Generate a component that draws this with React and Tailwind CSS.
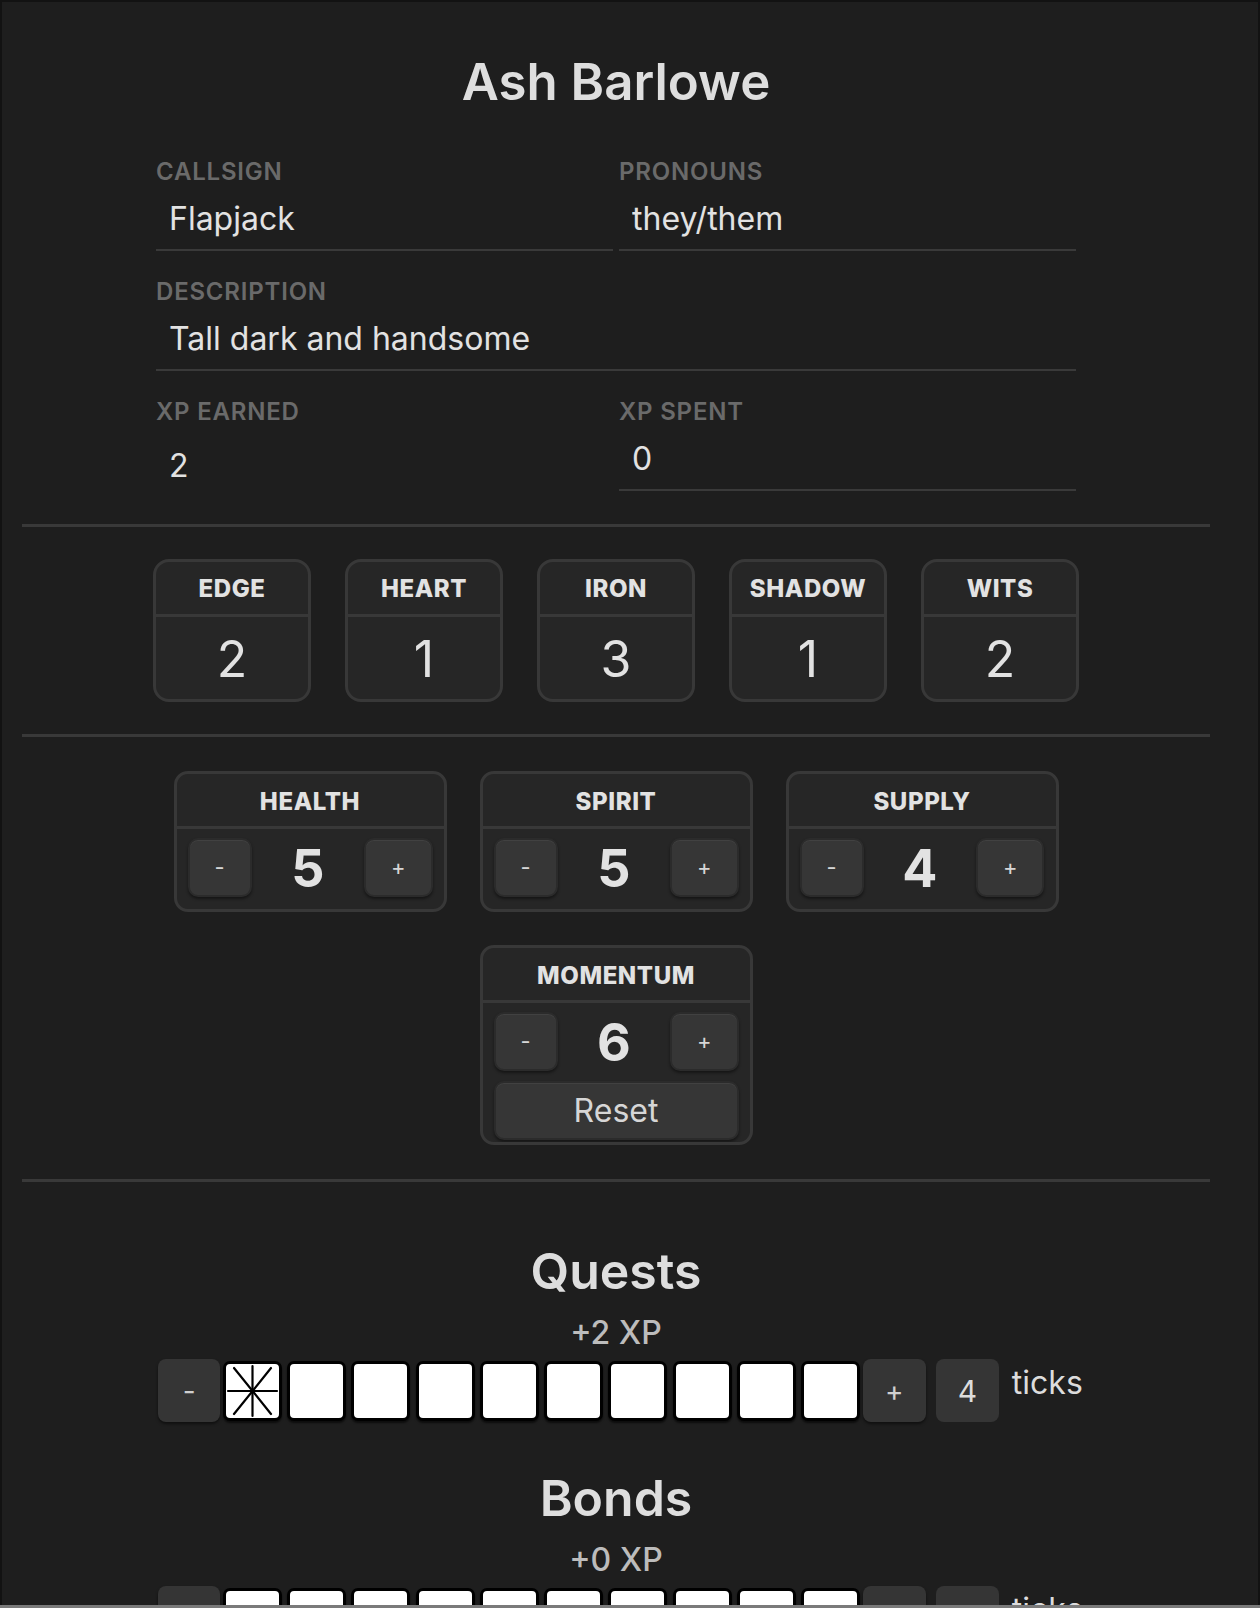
import React from 'react';

const stats = [
  ['EDGE', 2],
  ['HEART', 1],
  ['IRON', 3],
  ['SHADOW', 1],
  ['WITS', 2],
];

function Field({ label, value, plain }) {
  return (
    <div className="flex flex-col">
      <label className="text-[24px] leading-[30px] font-semibold uppercase tracking-[0.8px] text-[#6a6a6a]">{label}</label>
      {plain ? (
        <div className="pt-[19px] px-[13px] text-[32px] leading-[40px] text-[#e2e2e2]">{value}</div>
      ) : (
        <input
          readOnly
          value={value}
          className="w-full bg-transparent outline-none pt-[12px] pb-[10px] px-[13px] text-[32px] leading-[40px] text-[#e2e2e2] border-b-2 border-[#3a3a3a]"
        />
      )}
    </div>
  );
}

function StatBox({ name, value }) {
  return (
    <div className="w-[158px] rounded-[16px] border-[3px] border-[#383838] bg-[#262626] overflow-hidden">
      <div className="h-[55px] pt-[2px] flex items-center justify-center border-b-[3px] border-[#383838] text-[24px] font-extrabold tracking-[0.6px] text-[#e2e2e2]">
        {name}
      </div>
      <div className="h-[82px] flex items-center justify-center pt-[3px] text-[50px] text-[#e2e2e2]">{value}</div>
    </div>
  );
}

function SmallBtn({ children }) {
  return (
    <button className="h-[59px] px-[25px] rounded-[10px] bg-[#363636] border-2 border-[#2b2b2b] shadow-[inset_0_1px_0_rgba(255,255,255,0.06),0_2px_3px_rgba(0,0,0,0.45)] text-[22px] text-[#d6d6d6]">
      {children}
    </button>
  );
}

function Meter({ name, value, reset }) {
  return (
    <div className="w-[273px] rounded-[14px] border-[3px] border-[#383838] bg-[#262626] overflow-hidden">
      <div className="h-[55px] pt-[3px] flex items-center justify-center border-b-[3px] border-[#383838] text-[24px] font-extrabold tracking-[0.6px] text-[#e2e2e2]">
        {name}
      </div>
      <div className={`px-[11px] pt-[9px] ${reset ? 'pb-[2px]' : 'pb-[12px]'}`}>
        <div className="flex items-center justify-between h-[59px]">
          <SmallBtn>-</SmallBtn>
          <span className="pt-[2px] text-[52px] leading-[57px] font-bold text-[#e2e2e2]">{value}</span>
          <SmallBtn>+</SmallBtn>
        </div>
        {reset && (
          <button className="mt-[10px] w-full h-[59px] rounded-[10px] bg-[#363636] border-2 border-[#2b2b2b] shadow-[inset_0_1px_0_rgba(255,255,255,0.06),0_2px_3px_rgba(0,0,0,0.45)] text-[32px] text-[#d6d6d6]">
            Reset
          </button>
        )}
      </div>
    </div>
  );
}

function Ticks({ n }) {
  if (!n) return null;
  return (
    <svg viewBox="0 0 53 54" className="w-full h-full" stroke="#000" strokeWidth="2.2" strokeLinecap="round">
      {n >= 1 && <line x1="8" y1="4" x2="45" y2="50" />}
      {n >= 2 && <line x1="45" y1="4" x2="8" y2="50" />}
      {n >= 3 && <line x1="26.5" y1="2" x2="26.5" y2="52" />}
      {n >= 4 && <line x1="2" y1="27" x2="51" y2="27" />}
    </svg>
  );
}

function Track({ title, ticks, xp }) {
  const boxes = Array.from({ length: 10 }, (_, i) => Math.max(0, Math.min(4, ticks - i * 4)));
  return (
    <div className="flex flex-col items-center">
      <h2 className="text-[50px] leading-[60px] font-semibold text-[#dedede]">{title}</h2>
      <div className="mt-[12px] text-[32px] leading-[39px] font-medium text-[#bcbcbc]">+{xp} XP</div>
      <div className="mt-[7px] flex items-center pl-[9px]">
        <button className="w-[62px] h-[63px] rounded-[8px] bg-[#353535] shadow-[0_2px_3px_rgba(0,0,0,0.5)] text-[28px] text-[#cfcfcf]">-</button>
        <div className="mx-[2.5px] flex items-center gap-[5.3px]">
          {boxes.map((b, i) => (
            <div
              key={i}
              className="w-[59px] h-[60px] rounded-[7px] bg-white border-[3px] border-black shadow-[0_2px_2px_rgba(0,0,0,0.6)]"
            >
              <Ticks n={b} />
            </div>
          ))}
        </div>
        <button className="w-[63px] h-[63px] rounded-[8px] bg-[#353535] shadow-[0_2px_3px_rgba(0,0,0,0.5)] text-[28px] text-[#cfcfcf]">+</button>
        <div className="ml-[10px] w-[63px] h-[63px] rounded-[8px] bg-[#353535] flex items-center justify-center text-[30px] leading-[36px] text-[#dcdcdc]">
          {ticks}
        </div>
        <span className="ml-[13px] self-start mt-[4px] text-[32px] leading-[39px] text-[#dcdcdc]">ticks</span>
      </div>
    </div>
  );
}

export default function App() {
  return (
    <div className="min-h-screen bg-[#1e1e1e] border-2 border-[#121212] font-[Inter,sans-serif]">
      <div className="w-[1228px] px-[20px] pt-[50px] pb-[80px]">
        <h1 className="text-center text-[51px] leading-[60px] font-semibold text-[#dedede]">Ash Barlowe</h1>

        <div className="mt-[45px] mx-auto w-[920px] flex flex-col gap-[26px]">
          <div className="grid grid-cols-2 gap-x-[6px]">
            <Field label="Callsign" value="Flapjack" />
            <Field label="Pronouns" value="they/them" />
          </div>
          <Field label="Description" value="Tall dark and handsome" />
          <div className="grid grid-cols-2 gap-x-[6px]">
            <Field label="XP Earned" value="2" plain />
            <Field label="XP Spent" value="0" />
          </div>
        </div>

        <div className="mt-[33px] h-[3px] bg-[#393939]" />

        <div className="mt-[32px] flex justify-center gap-[34px]">
          {stats.map(([n, v]) => (
            <StatBox key={n} name={n} value={v} />
          ))}
        </div>

        <div className="mt-[32px] h-[3px] bg-[#393939]" />

        <div className="mt-[34px] flex flex-col items-center gap-[33px]">
          <div className="flex justify-center gap-[33px]">
            <Meter name="HEALTH" value={5} />
            <Meter name="SPIRIT" value={5} />
            <Meter name="SUPPLY" value={4} />
          </div>
          <Meter name="MOMENTUM" value={6} reset />
        </div>

        <div className="mt-[34px] h-[3px] bg-[#393939]" />

        <div className="mt-[59px] flex flex-col gap-[46px]">
          <Track title="Quests" ticks={4} xp={2} />
          <Track title="Bonds" ticks={0} xp={0} />
          <Track title="Discoveries" ticks={0} xp={0} />
        </div>
      </div>
      <div className="fixed bottom-0 left-0 right-0 h-[3px] bg-[#7a7a7a]" />
    </div>
  );
}
